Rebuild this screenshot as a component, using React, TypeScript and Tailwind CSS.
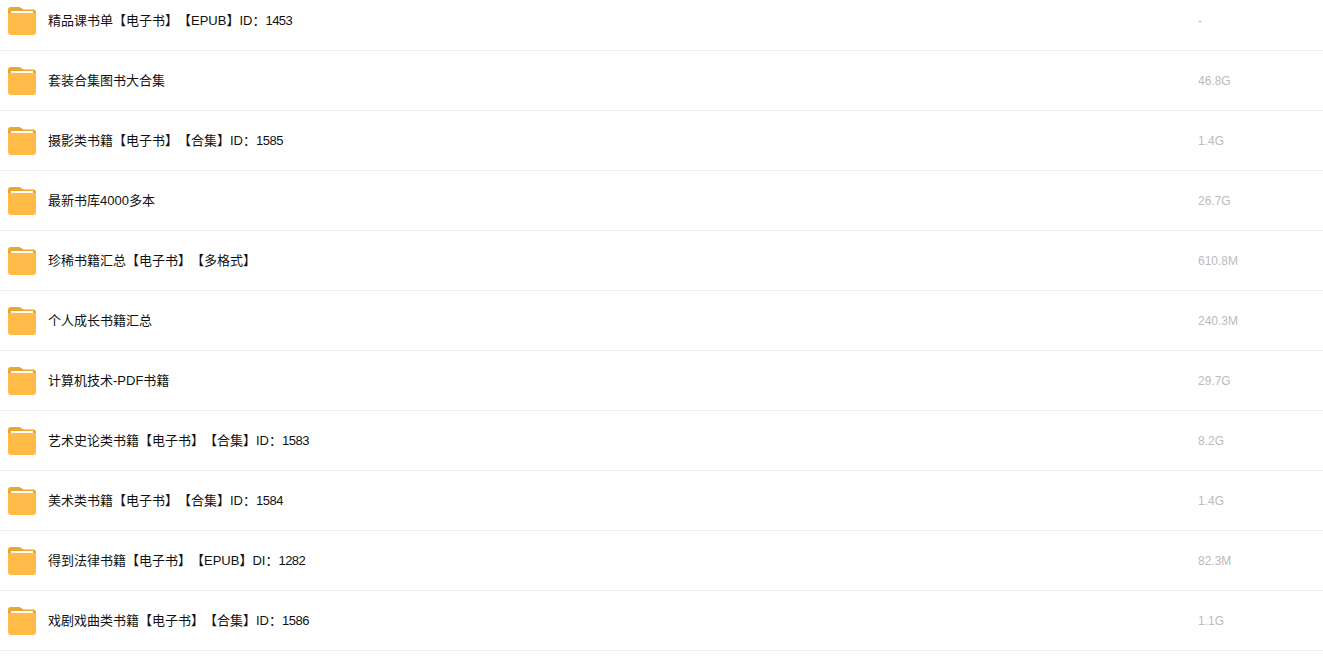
import React from "react";

const files = [
  { name: "精品课书单【电子书】【EPUB】ID：", id: "1453", size: "-" },
  { name: "套装合集图书大合集", size: "46.8G" },
  { name: "摄影类书籍【电子书】【合集】ID：", id: "1585", size: "1.4G" },
  { name: "最新书库4000多本", size: "26.7G" },
  { name: "珍稀书籍汇总【电子书】【多格式】", size: "610.8M" },
  { name: "个人成长书籍汇总", size: "240.3M" },
  { name: "计算机技术-PDF书籍", size: "29.7G" },
  { name: "艺术史论类书籍【电子书】【合集】ID：", id: "1583", size: "8.2G" },
  { name: "美术类书籍【电子书】【合集】ID：", id: "1584", size: "1.4G" },
  { name: "得到法律书籍【电子书】【EPUB】DI：", id: "1282", size: "82.3M" },
  { name: "戏剧戏曲类书籍【电子书】【合集】ID：", id: "1586", size: "1.1G" },
];

function FolderIcon() {
  return (
    <svg width="28" height="28" viewBox="0 0 28 28" className="shrink-0">
      <path d="M0 3a3 3 0 0 1 3-3h7c2 0 3 .6 4 1.6.5.5 1 .9 2 .9h9a3 3 0 0 1 3 3V8H0z" fill="#eaa62f" />
      <path d="M0 6h28v19a3 3 0 0 1-3 3H3a3 3 0 0 1-3-3z" fill="#ffba47" />
      <rect x="3" y="4" width="22" height="2" fill="#fff" />
    </svg>
  );
}

export default function App() {
  return (
    <div className="h-[659px] overflow-hidden bg-white font-['Liberation_Sans','Noto_Sans_CJK_SC',sans-serif] text-xs">
      <div className="-mt-[9px]">
        {files.map((file) => (
          <div key={file.name} className="flex h-[60px] items-center border-b border-[#eeeeee] pl-2">
            <FolderIcon />
            <div className="ml-3 flex-1 text-[13px] text-[#111111] [text-spacing-trim:space-all]">
              {file.name}
              {file.id && <span className="tracking-[-0.5px]">{file.id}</span>}
            </div>
            <div className="w-[125px] text-[#bbbbbb]">{file.size}</div>
          </div>
        ))}
      </div>
    </div>
  );
}
